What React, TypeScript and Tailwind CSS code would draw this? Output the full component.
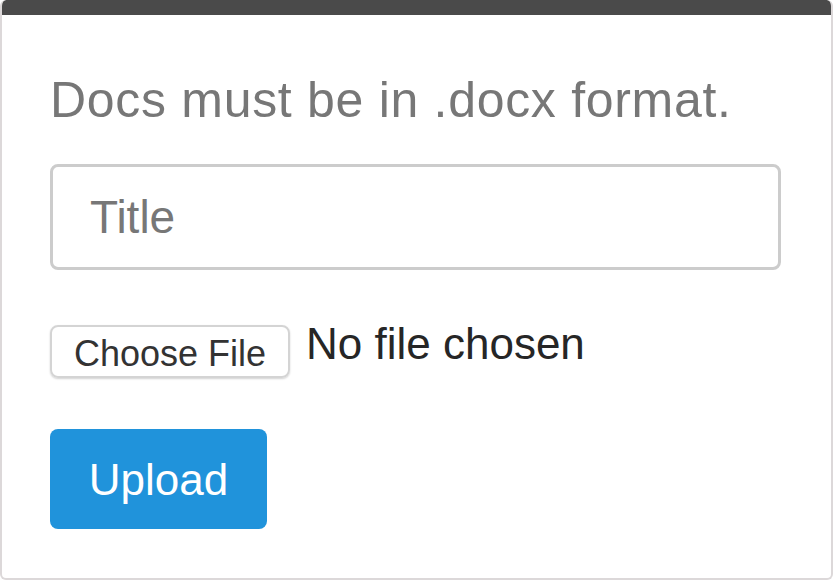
import React from "react";

export default function App() {
  return (
    <div className="w-[836px] h-[582px] bg-white" style={{ fontFamily: '"Liberation Sans", Arial, sans-serif' }}>
      <div className="w-[833px] h-[580px] border-2 border-t-0 border-[#dcd8d9] rounded-[6px] overflow-hidden flex flex-col">
        <div className="h-[15px] shrink-0 bg-[#4a4a4a] -mx-[2px] rounded-t-[6px]" />
        <div className="flex flex-col pl-[48px] pr-[50px]">
          <p className="mt-[56px] text-[50px] leading-[58px] tracking-[0.7px] text-[#777777] whitespace-nowrap">Docs must be in .docx format.</p>
          <div className="mt-[35px] h-[106px] w-[731px] border-[3px] border-[#cccccc] rounded-[8px] flex items-center pl-[37px]">
            <span className="text-[46px] text-[#777777]">Title</span>
          </div>
          <div className="mt-[55px] flex items-start">
            <div className="h-[53px] w-[240px] border-2 border-[#d4d4d4] rounded-[8px] flex items-center justify-center pt-[4px] shadow-[0_1px_2px_rgba(0,0,0,0.18)]">
              <span className="text-[36px] text-[#333333] whitespace-nowrap">Choose File</span>
            </div>
            <span className="ml-[16px] -mt-[6px] text-[44px] leading-[50px] text-[#262626] whitespace-nowrap">No file chosen</span>
          </div>
          <div className="mt-[51px] h-[100px] w-[217px] bg-[#2093db] rounded-[8px] flex items-center justify-center pt-[2px]">
            <span className="text-[44px] text-white">Upload</span>
          </div>
        </div>
      </div>
    </div>
  );
}
